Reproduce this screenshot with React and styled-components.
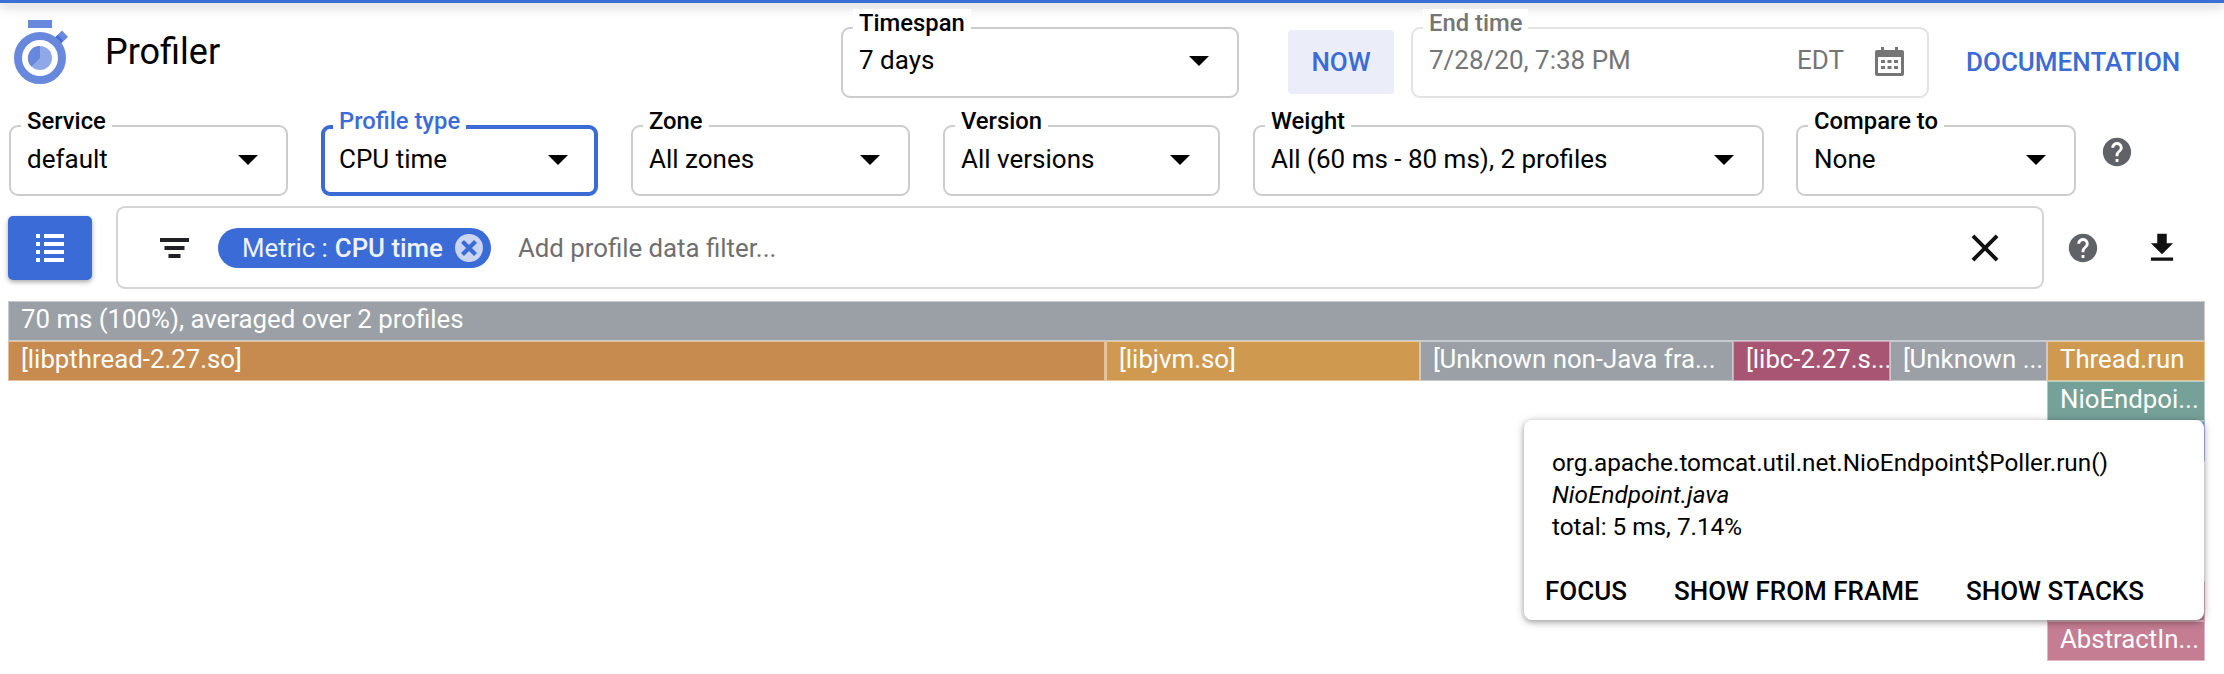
import React from "react";
import styled, { createGlobalStyle } from "styled-components";

const GlobalStyle = createGlobalStyle`
  html, body {
    margin: 0;
    background: #fff;
    font-family: Roboto, "Noto Sans", sans-serif;
    color: #000;
  }
`;

const Page = styled.div`
  position: relative;
  width: 2224px;
  height: 674px;
  overflow: hidden;
  background: #fff;
`;

const TopBar = styled.div`
  height: 3px;
  background: #3b6fd6;
  box-shadow: 0 2px 12px rgba(0, 0, 0, 0.45);
`;

const Header = styled.div`
  display: flex;
  align-items: center;
  height: 70px;
  margin-top: 24px;
`;

const Logo = styled.svg`
  align-self: flex-start;
  width: 60px;
  height: 70px;
  margin: -7px 0 0 12px;
  flex: none;
`;

const Title = styled.h1`
  flex: none;
  width: 736px;
  margin: 0 0 20px 33px;
  font-size: 36px;
  font-weight: 400;
`;

const Field = styled.div`
  position: relative;
  box-sizing: border-box;
  flex: none;
  display: flex;
  align-items: center;
  width: ${(p) => p.$w}px;
  height: 71px;
  padding: 0 ${(p) => (p.$active ? 26 : 28)}px 2px ${(p) => (p.$active ? 14 : 16)}px;
  border: ${(p) => (p.$active ? 4 : 2)}px solid
    ${(p) => (p.$active ? "#3b6bd6" : p.$disabled ? "#e3e3e3" : "#cccccc")};
  border-radius: 9px;
  font-size: 26px;
  color: ${(p) => (p.$disabled ? "#757575" : "#000")};
`;

const FieldLabel = styled.span`
  position: absolute;
  left: ${(p) => (p.$active ? 8 : 10)}px;
  top: ${(p) => (p.$active ? -22 : -20)}px;
  padding: 0 6px;
  background: #fff;
  font-size: 23.8px;
  font-weight: 500;
  line-height: 28px;
  white-space: nowrap;
  color: ${(p) => (p.$active ? "#3b6bd6" : p.$disabled ? "#757575" : "#000")};
`;

const Value = styled.span`
  flex: 1;
  margin-bottom: 2px;
  white-space: nowrap;
`;

const Caret = styled.span`
  flex: none;
  width: 0;
  height: 0;
  border-left: 10px solid transparent;
  border-right: 10px solid transparent;
  border-top: 10px solid #000;
`;

const NowButton = styled.div`
  flex: none;
  display: flex;
  align-items: center;
  justify-content: center;
  width: 106px;
  height: 64px;
  margin: 0 17px 0 49px;
  background: #ebeef9;
  border-radius: 4px;
  color: #3b6bd6;
  font-size: 26px;
  font-weight: 500;
`;

const Zone = styled.span`
  flex: none;
  margin: 0 31px 2px 0;
`;

const DocLink = styled.div`
  margin-left: 37px;
  color: #3b6bd6;
  font-size: 26px;
  font-weight: 500;
  white-space: nowrap;
`;

const SelectRow = styled.div`
  display: flex;
  align-items: center;
  margin: 28px 0 0 9px;
`;

const Gap = styled.div`
  flex: none;
  width: ${(p) => p.$w}px;
`;

const Icon = styled.svg`
  flex: none;
  width: ${(p) => p.$size}px;
  height: ${(p) => p.$h || p.$size}px;
  fill: ${(p) => p.$color || "#000"};
`;

const CalendarIcon = styled(Icon)`
  margin-right: -5px;
`;

const SelectHelp = styled(Icon)`
  margin-top: -17px;
`;

const FilterRow = styled.div`
  display: flex;
  align-items: center;
  margin: 10px 0 0 8px;
`;

const ListButton = styled.div`
  flex: none;
  display: flex;
  align-items: center;
  justify-content: center;
  width: 84px;
  height: 64px;
  border-radius: 5px;
  background: #3b6bd6;
  box-shadow: 0 2px 5px rgba(0, 0, 0, 0.35);
`;

const FilterBox = styled.div`
  box-sizing: border-box;
  flex: none;
  display: flex;
  align-items: center;
  width: 1928px;
  height: 83px;
  margin-left: 24px;
  padding: 0 34px 0 42px;
  border: 2px solid #d4d4d4;
  border-radius: 9px;
`;

const Chip = styled.div`
  display: flex;
  align-items: center;
  flex: none;
  box-sizing: border-box;
  height: 40px;
  margin-left: 29px;
  padding: 0 8px 0 24px;
  border-radius: 20px;
  background: #3b6bd6;
  color: #eef2fc;
  font-size: 25.8px;
  white-space: nowrap;
  b {
    font-weight: 500;
    margin-left: 7px;
  }
`;

const ChipClose = styled.span`
  display: flex;
  align-items: center;
  justify-content: center;
  width: 28px;
  height: 28px;
  margin-left: 12px;
  border-radius: 50%;
  background: #c9d5f3;
`;

const Placeholder = styled.div`
  flex: 1;
  margin-left: 27px;
  color: #6f6f6f;
  font-size: 25.8px;
`;

const RightIcons = styled.div`
  display: flex;
  align-items: center;
  gap: 43px;
  margin-left: 22px;
`;

const Flame = styled.div`
  display: flex;
  flex-direction: column;
  width: 2197px;
  margin: 12px 0 0 8px;
`;

const FlameRow = styled.div`
  display: flex;
  justify-content: flex-end;
  height: 40px;
`;

const Frame = styled.div`
  box-sizing: border-box;
  flex: none;
  width: ${(p) => p.$w}px;
  height: 40px;
  padding-left: 12px;
  background: ${(p) => p.$bg};
  border: 1px solid rgba(255, 255, 255, 0.45);
  border-left-width: ${(p) => (p.$sep ? 2 : 1)}px;
  color: #fff;
  font-size: 25.8px;
  line-height: 34px;
  white-space: nowrap;
  overflow: hidden;
`;

const Tooltip = styled.div`
  position: absolute;
  left: 1524px;
  top: 420px;
  box-sizing: border-box;
  width: 680px;
  height: 200px;
  padding: 27px 0 0 28px;
  border-radius: 8px;
  background: #fff;
  box-shadow: 0 2px 6px rgba(0, 0, 0, 0.35), 0 1px 12px rgba(0, 0, 0, 0.1);
  font-size: 24.3px;
  line-height: 32px;
`;

const TooltipLine = styled.div`
  white-space: nowrap;
  font-style: ${(p) => (p.$italic ? "italic" : "normal")};
`;

const TooltipActions = styled.div`
  display: flex;
  margin: 32px 0 0 -7px;
`;

const TooltipAction = styled.div`
  flex: none;
  width: ${(p) => p.$w}px;
  font-size: 26px;
  font-weight: 500;
  white-space: nowrap;
`;

const HELP =
  "M12 2C6.48 2 2 6.48 2 12s4.48 10 10 10 10-4.48 10-10S17.52 2 12 2zm1 17h-2v-2h2v2zm2.07-7.75l-.9.92C13.45 12.9 13 13.5 13 15h-2v-.5c0-1.1.45-2.1 1.17-2.83l1.24-1.26c.37-.36.59-.86.59-1.41 0-1.1-.9-2-2-2s-2 .9-2 2H8c0-2.21 1.79-4 4-4s4 1.79 4 4c0 .88-.36 1.68-.93 2.25z";

const selects = [
  { label: "Service", value: "default", w: 279, gap: 33 },
  { label: "Profile type", value: "CPU time", w: 277, gap: 33, active: true },
  { label: "Zone", value: "All zones", w: 279, gap: 33 },
  { label: "Version", value: "All versions", w: 277, gap: 33 },
  { label: "Weight", value: "All (60 ms - 80 ms), 2 profiles", w: 511, gap: 32 },
  { label: "Compare to", value: "None", w: 280, gap: 24 },
];

function Select({ label, value, w, active }) {
  return (
    <Field $w={w} $active={active}>
      <FieldLabel $active={active}>{label}</FieldLabel>
      <Value>{value}</Value>
      <Caret />
    </Field>
  );
}

function StopwatchLogo() {
  return (
    <Logo viewBox="0 0 60 70">
      <rect x="16" y="0" width="24" height="8" fill="#6788dc" />
      <path d="M50 10.5 L56 17 L48.5 24 L42.5 18 Z" fill="#6788dc" />
      <path d="M42.5 18 L45.5 15 L51 20.5 L48.5 24 Z" fill="#3f6ad8" />
      <circle cx="28" cy="38" r="22" fill="none" stroke="#6788dc" strokeWidth="8" />
      <circle cx="28" cy="38" r="12" fill="#8fa8e8" />
      <path d="M28 38 V26 A12 12 0 0 0 19.5 46.5 Z" fill="#6788dc" />
    </Logo>
  );
}

function App() {
  return (
    <Page>
      <GlobalStyle />
      <TopBar />
      <Header>
        <StopwatchLogo />
        <Title>Profiler</Title>
        <Field $w={398}>
          <FieldLabel>Timespan</FieldLabel>
          <Value>7 days</Value>
          <Caret />
        </Field>
        <NowButton>NOW</NowButton>
        <Field $w={518} $disabled>
          <FieldLabel $disabled>End time</FieldLabel>
          <Value>7/28/20, 7:38 PM</Value>
          <Zone>EDT</Zone>
          <CalendarIcon viewBox="0 0 29 29" $size={29}>
            <path
              fill="#757575"
              fillRule="evenodd"
              d="M2 3h4V0h3v3h11V0h3v3h4a2 2 0 0 1 2 2v22a2 2 0 0 1-2 2H2a2 2 0 0 1-2-2V5a2 2 0 0 1 2-2zM3 10v16h23V10zM6 13h4v3H6zM12.5 13h4v3h-4zM19 13h4v3h-4zM6 19h4v3H6zM12.5 19h4v3h-4zM19 19h4v3h-4z"
            />
          </CalendarIcon>
        </Field>
        <DocLink>DOCUMENTATION</DocLink>
      </Header>

      <SelectRow>
        {selects.map((s) => (
          <React.Fragment key={s.label}>
            <Select {...s} />
            <Gap $w={s.gap} />
          </React.Fragment>
        ))}
        <SelectHelp viewBox="0 0 24 24" $size={34} $color="#5f6368">
          <path d={HELP} />
        </SelectHelp>
      </SelectRow>

      <FilterRow>
        <ListButton>
          <Icon viewBox="0 0 28 28" $size={28} $color="#fff">
            <path d="M0 0h4v4H0zM8 0h20v4H8zM0 8h4v4H0zM8 8h20v4H8zM0 16h4v4H0zM8 16h20v4H8zM0 24h4v4H0zM8 24h20v4H8z" />
          </Icon>
        </ListButton>
        <FilterBox>
          <Icon viewBox="0 0 29 20" $size={29} $h={20} $color="#202124">
            <path d="M0 0h29v4H0zM4.5 8h20v4h-20zM8.5 16h12v4h-12z" />
          </Icon>
          <Chip>
            Metric : <b>CPU time</b>
            <ChipClose>
              <Icon viewBox="5 5 14 14" $size={16} $color="#3b6bd6">
                <path d="M19 7.6L16.4 5 12 9.4 7.6 5 5 7.6 9.4 12 5 16.4 7.6 19 12 14.6 16.4 19 19 16.4 14.6 12z" />
              </Icon>
            </ChipClose>
          </Chip>
          <Placeholder>Add profile data filter...</Placeholder>
          <Icon viewBox="0 0 24 24" $size={46} $color="#111">
            <path d="M19 6.41L17.59 5 12 10.59 6.41 5 5 6.41 10.59 12 5 17.59 6.41 19 12 13.41 17.59 19 19 17.59 13.41 12z" />
          </Icon>
        </FilterBox>
        <RightIcons>
          <Icon viewBox="0 0 24 24" $size={34} $color="#5f6368">
            <path d={HELP} />
          </Icon>
          <Icon viewBox="0 0 24 24" $size={38} $color="#111">
            <path d="M19 9h-4V3H9v6H5l7 7 7-7zM5 18v2h14v-2H5z" />
          </Icon>
        </RightIcons>
      </FilterRow>

      <Flame>
        <FlameRow>
          <Frame $w={2197} $bg="#9aa0a6">70 ms (100%), averaged over 2 profiles</Frame>
        </FlameRow>
        <FlameRow>
          <Frame $w={1097} $bg="#c78a4f">[libpthread-2.27.so]</Frame>
          <Frame $w={315} $bg="#cf9a50" $sep>[libjvm.so]</Frame>
          <Frame $w={313} $bg="#9aa0a6">[Unknown non-Java fra...</Frame>
          <Frame $w={157} $bg="#a85473">[libc-2.27.s...</Frame>
          <Frame $w={157} $bg="#9aa0a6">[Unknown ...</Frame>
          <Frame $w={158} $bg="#cf9a50">Thread.run</Frame>
        </FlameRow>
        <FlameRow>
          <Frame $w={158} $bg="#76a198">NioEndpoi...</Frame>
        </FlameRow>
        <FlameRow>
          <Frame $w={158} $bg="#6c8bdc" />
        </FlameRow>
        <FlameRow />
        <FlameRow />
        <FlameRow />
        <FlameRow>
          <Frame $w={158} $bg="#c47d93" />
        </FlameRow>
        <FlameRow>
          <Frame $w={158} $bg="#c47d93">AbstractIn...</Frame>
        </FlameRow>
      </Flame>

      <Tooltip>
        <TooltipLine>org.apache.tomcat.util.net.NioEndpoint$Poller.run()</TooltipLine>
        <TooltipLine $italic>NioEndpoint.java</TooltipLine>
        <TooltipLine>total: 5 ms, 7.14%</TooltipLine>
        <TooltipActions>
          <TooltipAction $w={129}>FOCUS</TooltipAction>
          <TooltipAction $w={292}>SHOW FROM FRAME</TooltipAction>
          <TooltipAction $w={180}>SHOW STACKS</TooltipAction>
        </TooltipActions>
      </Tooltip>
    </Page>
  );
}

export default App;
